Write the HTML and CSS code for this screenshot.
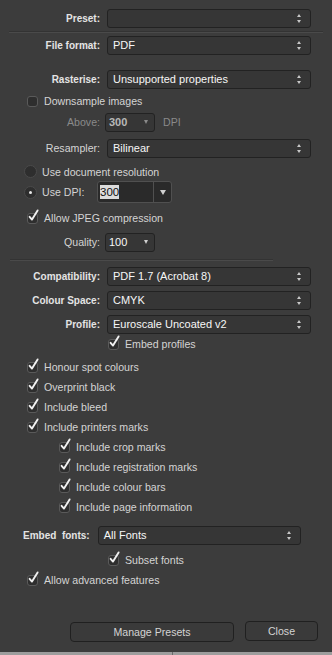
FILE: index.html
```html
<!DOCTYPE html>
<html lang="en">
<head>
  <meta charset="UTF-8" />
  <title>Export PDF</title>
  <link rel="stylesheet" href="styles.css">
</head>
<body>
  <div id="panel">
    <div class="row field row-preset">
      <span class="label">Preset:</span>
      <div class="select"><span class="value"></span><span class="updown"></span></div>
    </div>
    <div class="rule"></div>

    <div class="row field row-format">
      <span class="label">File format:</span>
      <div class="select"><span class="value">PDF</span><span class="updown"></span></div>
    </div>

    <div class="row field row-raster">
      <span class="label">Rasterise:</span>
      <div class="select"><span class="value">Unsupported properties</span><span class="updown"></span></div>
    </div>

    <label class="row check row-downsample">
      <span class="box"></span>
      <span>Downsample images</span>
    </label>

    <div class="row field row-above disabled">
      <span class="label">Above:</span>
      <div class="mini"><span class="value">300</span><span class="down"></span></div>
      <span class="unit">DPI</span>
    </div>

    <div class="row field row-resampler">
      <span class="label light">Resampler:</span>
      <div class="select"><span class="value">Bilinear</span><span class="updown"></span></div>
    </div>

    <label class="row radio row-docres">
      <span class="dot"></span>
      <span>Use document resolution</span>
    </label>

    <div class="row radio row-dpi">
      <span class="dot on"></span>
      <span class="dpi-label">Use DPI:</span>
      <div class="combo">
        <span class="combo-text"><span class="sel">300</span></span>
        <span class="combo-btn"><span class="down"></span></span>
      </div>
    </div>

    <label class="row check row-jpeg">
      <span class="box on"></span>
      <span>Allow JPEG compression</span>
    </label>

    <div class="row field row-quality">
      <span class="label light">Quality:</span>
      <div class="mini"><span class="value">100</span><span class="down"></span></div>
    </div>

    <div class="rule short"></div>

    <div class="row field row-compat">
      <span class="label">Compatibility:</span>
      <div class="select"><span class="value">PDF 1.7 (Acrobat 8)</span><span class="updown"></span></div>
    </div>

    <div class="row field row-space">
      <span class="label">Colour Space:</span>
      <div class="select"><span class="value">CMYK</span><span class="updown"></span></div>
    </div>

    <div class="row field row-profile">
      <span class="label">Profile:</span>
      <div class="select"><span class="value">Euroscale Uncoated v2</span><span class="updown"></span></div>
    </div>

    <label class="row check indent-field row-embed">
      <span class="box on"></span>
      <span>Embed profiles</span>
    </label>

    <div class="checks">
      <label class="row check"><span class="box on"></span><span>Honour spot colours</span></label>
      <label class="row check"><span class="box on"></span><span>Overprint black</span></label>
      <label class="row check"><span class="box on"></span><span>Include bleed</span></label>
      <label class="row check"><span class="box on"></span><span>Include printers marks</span></label>
      <label class="row check sub"><span class="box on"></span><span>Include crop marks</span></label>
      <label class="row check sub"><span class="box on"></span><span>Include registration marks</span></label>
      <label class="row check sub"><span class="box on"></span><span>Include colour bars</span></label>
      <label class="row check sub"><span class="box on"></span><span>Include page information</span></label>
    </div>

    <div class="row field row-fonts">
      <span class="label">Embed&nbsp; fonts:</span>
      <div class="select"><span class="value">All Fonts</span><span class="updown"></span></div>
    </div>

    <label class="row check indent-field row-subset">
      <span class="box on"></span>
      <span>Subset fonts</span>
    </label>

    <label class="row check row-advanced">
      <span class="box on"></span>
      <span>Allow advanced features</span>
    </label>

    <div class="buttons">
      <button class="btn btn-presets">Manage Presets</button>
      <button class="btn btn-close">Close</button>
    </div>
  </div>
  <div id="under">
    <div class="under-left"></div>
    <div class="under-right"></div>
  </div>

  <script>
    // draw the tick into every checked box
    const tick = '<svg width="13" height="14" viewBox="0 0 13 14"><path d="M2.6 7.8 L5 10.6 L10.6 1.4" fill="none" stroke="#f0f0f0" stroke-width="1.9" stroke-linecap="round" stroke-linejoin="round"/></svg>';
    document.querySelectorAll(".box.on").forEach(el => {
      el.innerHTML = tick;
    });
  </script>
</body>
</html>
```

FILE: styles.css
```css
body {
  margin: 0;
  padding: 0;
  width: 332px;
  height: 655px;
  overflow: hidden;
  background-color: #3c3c3c;
  font-family: "Liberation Sans", Arial, sans-serif;
  font-size: 10.6px;
  color: #d4d4d4;
  display: flex;
  flex-direction: column;
}

#panel {
  height: 652px;
  padding-top: 8px;
  box-sizing: border-box;
}

.row {
  display: flex;
  align-items: center;
  height: 20px;
}

.label {
  width: 100px;
  text-align: right;
  font-weight: bold;
  font-size: 10px;
  color: #e4e4e4;
  margin-right: 7px;
  flex: none;
}

.label.light {
  font-weight: normal;
  font-size: 10.6px;
  color: #d4d4d4;
}

.select {
  width: 204px;
  height: 19px;
  box-sizing: border-box;
  border: 1px solid #222;
  border-radius: 3px;
  background-color: #363636;
  display: flex;
  align-items: center;
  padding-left: 5px;
}

.select .value {
  flex: 1;
  font-size: 11px;
  color: #f6f6f6;
}

.updown {
  width: 5px;
  height: 9px;
  margin-right: 8px;
  position: relative;
}

.updown::before,
.updown::after {
  content: "";
  position: absolute;
  left: 0;
  border-left: 2.5px solid transparent;
  border-right: 2.5px solid transparent;
}

.updown::before {
  top: 0;
  border-bottom: 3px solid #c8c8c8;
}

.updown::after {
  bottom: 0;
  border-top: 3px solid #c8c8c8;
}

.rule {
  height: 1px;
  background-color: #4a4a4a;
  border-top: 1px solid #333;
  margin: 3px 9px 2px 9px;
}

.rule.short {
  margin: 7px 59px 5px 10px;
}

.row-raster { margin-top: 14px; }
.row-downsample { margin-top: 2px; }
.row-above { margin-top: 1px; }
.row-resampler { margin-top: 6px; }
.row-docres { margin-top: 4px; height: 19px; }
.row-dpi { height: 22px; }
.row-jpeg { margin-top: 5px; }
.row-quality { margin-top: 4px; }
.row-space,
.row-profile { margin-top: 4px; }
.checks { margin-top: 3px; }
.row-fonts { margin-top: 8px; }
.row-subset { margin-top: 5px; }

.check {
  padding-left: 27px;
}

.check.sub {
  padding-left: 59px;
}

.check.indent-field {
  padding-left: 108px;
}

.box {
  width: 11px;
  height: 11px;
  box-sizing: border-box;
  border: 1px solid #5a5a5a;
  border-radius: 3px;
  background-color: #2e2e2e;
  margin-right: 6px;
  position: relative;
  flex: none;
}

.box svg {
  position: absolute;
  left: -1px;
  top: -5px;
}

.radio {
  padding-left: 24px;
}

.dot {
  width: 13px;
  height: 13px;
  box-sizing: border-box;
  border-radius: 50%;
  border: 1px solid #4a4a4a;
  background-color: #2e2e2e;
  margin-right: 5px;
  position: relative;
  flex: none;
}

.dot.on::after {
  content: "";
  position: absolute;
  left: 4px;
  top: 4px;
  width: 3px;
  height: 3px;
  border-radius: 50%;
  background-color: #e8e8e8;
}

.dpi-label {
  width: 55px;
}

.combo {
  width: 75px;
  height: 22px;
  box-sizing: border-box;
  border: 1px solid #505050;
  border-radius: 3px;
  background-color: #2a2a2a;
  display: flex;
}

.combo-text {
  flex: 1;
  display: flex;
  align-items: center;
  padding-left: 2px;
  font-size: 11.5px;
}

.sel {
  background-color: #dcdcdc;
  color: #111;
  padding: 1px 0;
}

.combo-btn {
  width: 17px;
  border-left: 1px solid #505050;
  display: flex;
  align-items: center;
  justify-content: center;
}

.down {
  width: 0;
  height: 0;
  border-left: 3px solid transparent;
  border-right: 3px solid transparent;
  border-top: 5px solid #d0d0d0;
}

.mini {
  width: 50px;
  height: 19px;
  box-sizing: border-box;
  border: 1px solid #222;
  border-radius: 3px;
  background-color: #363636;
  display: flex;
  align-items: center;
  padding: 0 6px 0 3px;
  margin-left: -2px;
}

.mini .value {
  flex: 1;
  font-size: 11px;
  color: #f6f6f6;
}

.mini .down {
  border-left-width: 2.5px;
  border-right-width: 2.5px;
  border-top-width: 4px;
}

.disabled .label {
  font-weight: normal;
  font-size: 10.6px;
  color: #8a8a8a;
}

.disabled .mini .value {
  font-weight: bold;
  color: #b8b8b8;
}

.disabled .down {
  border-top-color: #8a8a8a;
}

.unit {
  margin-left: 8px;
  color: #8a8a8a;
}

.row-fonts .label {
  width: auto;
  margin-left: 23px;
  margin-right: 8px;
}

.row-fonts .select {
  width: 203px;
}

.buttons {
  display: flex;
  margin-top: 32px;
  padding-left: 70px;
  gap: 11px;
}

.btn {
  height: 20px;
  border: 1px solid #202020;
  border-radius: 4px;
  background-color: #3a3a3a;
  color: #d4d4d4;
  font-family: "Liberation Sans", Arial, sans-serif;
  font-size: 10.6px;
  padding: 0;
}

.btn-presets {
  width: 164px;
}

.btn-close {
  width: 73px;
  margin-top: -1px;
}

#under {
  height: 3px;
  display: flex;
  background-color: #9d9d9d;
}

.under-left {
  width: 172px;
  border-right: 1px solid #6a6a6a;
}
```
